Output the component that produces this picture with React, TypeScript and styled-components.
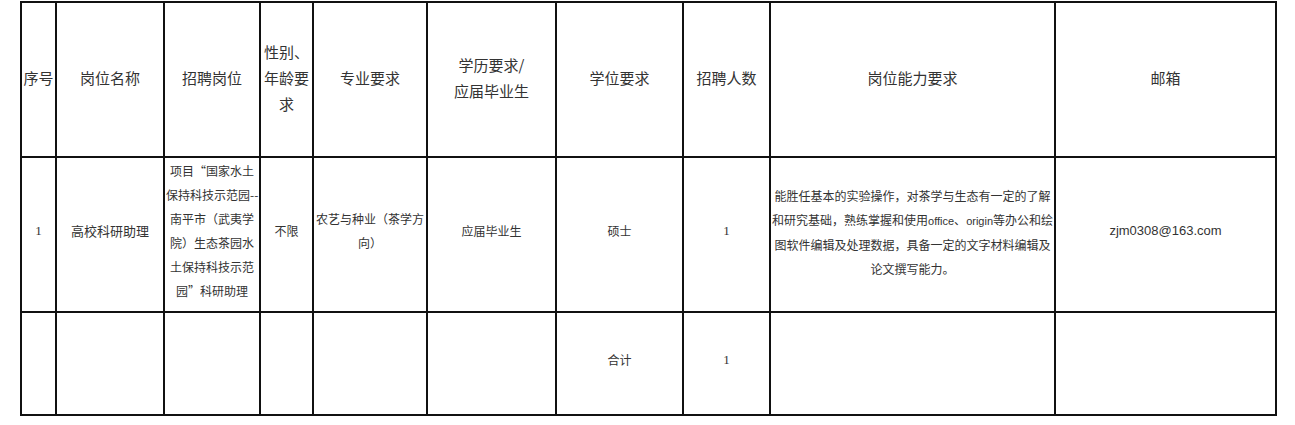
import styled, { createGlobalStyle } from 'styled-components';

const GlobalStyle = createGlobalStyle`
    body {
        margin: 0;
        background: #fff;
        font-family: "Noto Sans CJK SC", "Liberation Sans", sans-serif;
    }
`;

const columns = [35, 108, 96, 53, 114, 129, 127, 87, 285, 221];

const App = () => {
    return (
        <>
            <GlobalStyle />
            <Table>
                <colgroup>
                    {columns.map((w, i) => (
                        <Col key={i} $w={w} />
                    ))}
                </colgroup>
                <thead>
                    <Row $h={155}>
                        <HeadCell>序号</HeadCell>
                        <HeadCell>岗位名称</HeadCell>
                        <HeadCell>招聘岗位</HeadCell>
                        <HeadCell>性别、年龄要求</HeadCell>
                        <HeadCell>专业要求</HeadCell>
                        <HeadCell>
                            学历要求/
                            <br />
                            应届毕业生
                        </HeadCell>
                        <HeadCell>学位要求</HeadCell>
                        <HeadCell>招聘人数</HeadCell>
                        <HeadCell>岗位能力要求</HeadCell>
                        <HeadCell>邮箱</HeadCell>
                    </Row>
                </thead>
                <tbody>
                    <Row $h={155}>
                        <Cell>
                            <Num>1</Num>
                        </Cell>
                        <Cell $size={13}>高校科研助理</Cell>
                        <Cell>
                            <Line>项目“国家水土</Line>
                            <Line>保持科技示范园--</Line>
                            <Line>南平市（武夷学</Line>
                            <Line>院）生态茶园水</Line>
                            <Line>土保持科技示范</Line>
                            <Line>园”科研助理</Line>
                        </Cell>
                        <Cell>不限</Cell>
                        <Cell>
                            <Line>农艺与种业（茶学方</Line>
                            <Line>向）</Line>
                        </Cell>
                        <Cell>应届毕业生</Cell>
                        <Cell>硕士</Cell>
                        <Cell>
                            <Num>1</Num>
                        </Cell>
                        <Cell $pad={5}>
                            <Line>能胜任基本的实验操作，对茶学与生态有一定的了解</Line>
                            <Line>
                                和研究基础，熟练掌握和使用<Latin>office</Latin>、
                                <Latin>origin</Latin>等办公和绘
                            </Line>
                            <Line>图软件编辑及处理数据，具备一定的文字材料编辑及</Line>
                            <Line>论文撰写能力。</Line>
                        </Cell>
                        <Cell>
                            <Email>zjm0308@163.com</Email>
                        </Cell>
                    </Row>
                    <Row $h={103}>
                        <Cell />
                        <Cell />
                        <Cell />
                        <Cell />
                        <Cell />
                        <Cell />
                        <Cell>合计</Cell>
                        <Cell>
                            <Num>1</Num>
                        </Cell>
                        <Cell />
                        <Cell />
                    </Row>
                </tbody>
            </Table>
        </>
    );
};

const Table = styled.table`
    border-collapse: collapse;
    table-layout: fixed;
    width: 1256px;
    margin: 1px 0 0 20px;
    color: #333;
`;

const Col = styled.col<{ $w: number }>`
    width: ${(p) => p.$w}px;
`;

const Row = styled.tr<{ $h: number }>`
    height: ${(p) => p.$h}px;
`;

const HeadCell = styled.th`
    border: 2px solid #111;
    padding: 0 0 3px;
    font-size: 15px;
    line-height: 26px;
    font-weight: normal;
    text-align: center;
    vertical-align: middle;
`;

const Cell = styled.td<{ $size?: number; $pad?: number }>`
    border: 2px solid #111;
    padding: 0 1px ${(p) => p.$pad ?? 8}px;
    font-size: ${(p) => p.$size ?? 12}px;
    line-height: 24px;
    text-align: center;
    vertical-align: middle;
`;

const Line = styled.span`
    display: block;
    white-space: nowrap;
`;

const Latin = styled.span`
    font-family: "Liberation Sans", Arial, sans-serif;
    font-size: 11px;
`;

const Num = styled.span`
    font-family: "Liberation Serif", serif;
    font-size: 13px;
`;

const Email = styled.span`
    font-family: "Liberation Sans", Arial, sans-serif;
    font-size: 13px;
`;

export default App;
